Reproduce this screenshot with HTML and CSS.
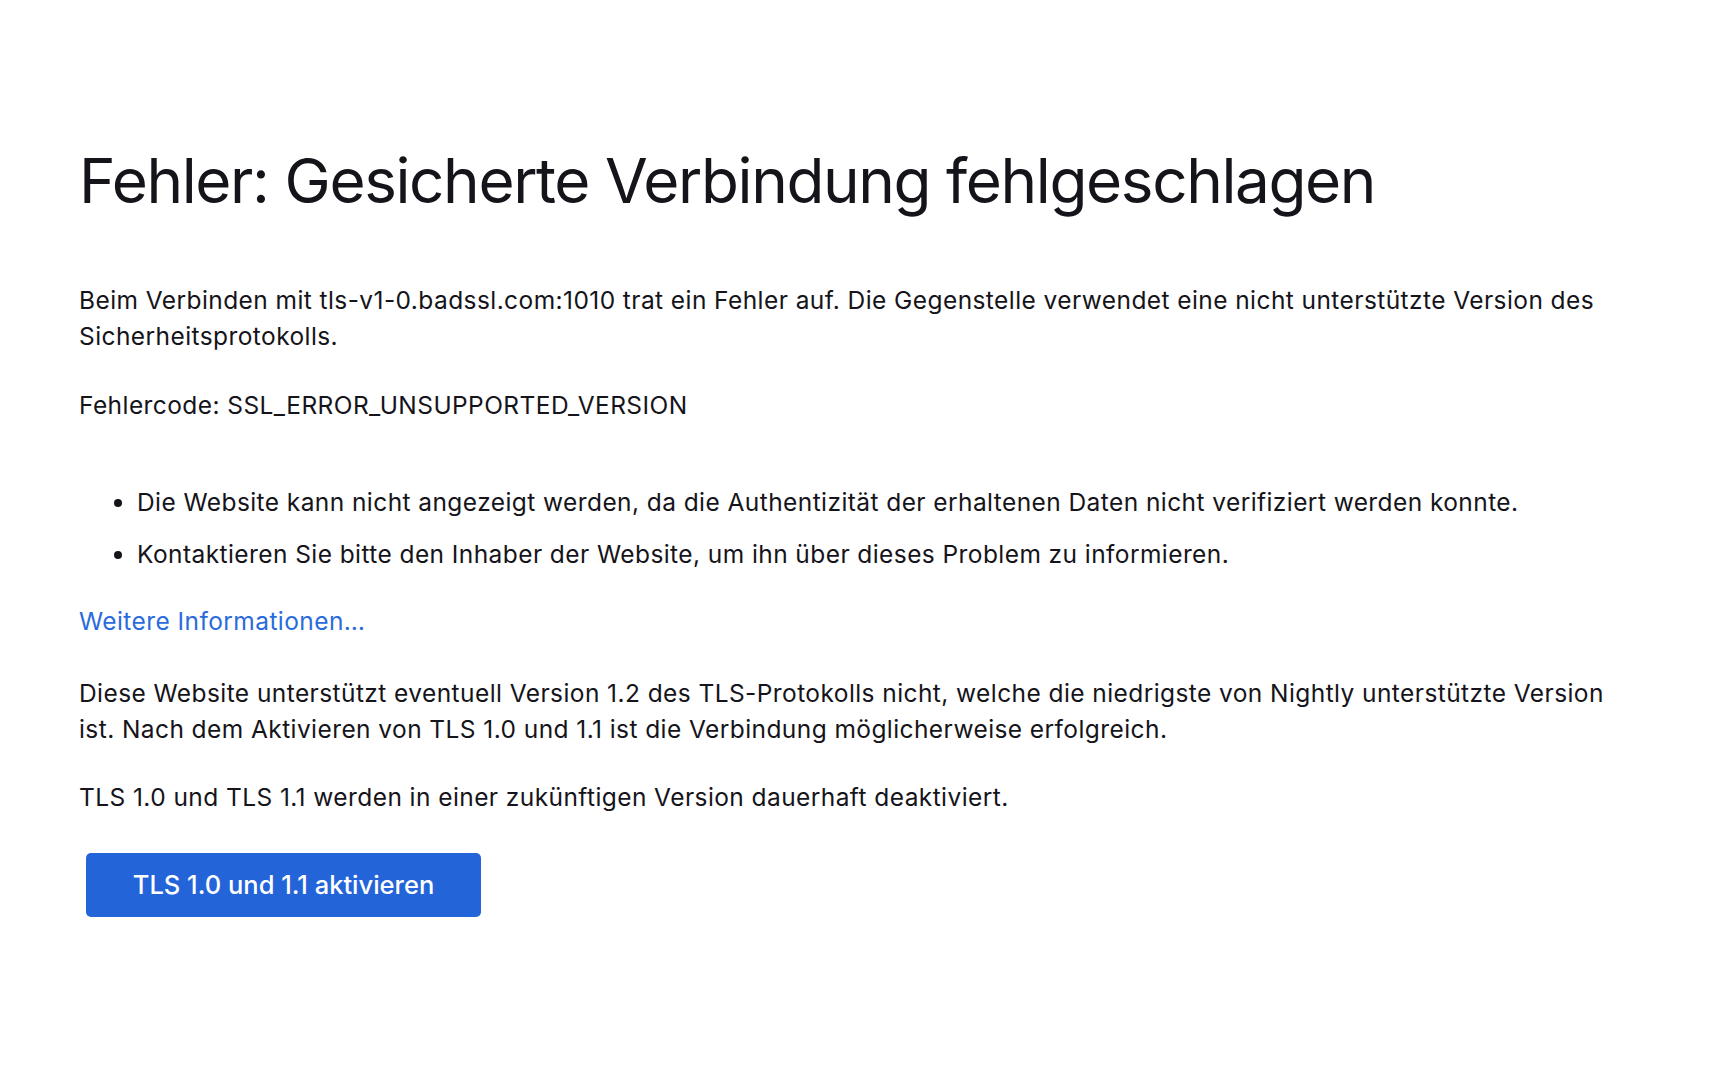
FILE: index.html
```html
<!DOCTYPE html>
<html lang="de">
<head>
<meta charset="utf-8">
<title>Fehler: Gesicherte Verbindung fehlgeschlagen</title>
<link rel="stylesheet" href="styles.css">
</head>
<body>
<main class="error-page">
  <h1 class="title">Fehler: Gesicherte Verbindung fehlgeschlagen</h1>
  <p class="text desc">Beim Verbinden mit tls-v1-0.badssl.com:1010 trat ein Fehler auf. Die Gegenstelle verwendet eine nicht unterstützte Version des Sicherheitsprotokolls.</p>
  <p class="text code">Fehlercode: SSL_ERROR_UNSUPPORTED_VERSION</p>
  <ul class="reasons">
    <li>Die Website kann nicht angezeigt werden, da die Authentizität der erhaltenen Daten nicht verifiziert werden konnte.</li>
    <li>Kontaktieren Sie bitte den Inhaber der Website, um ihn über dieses Problem zu informieren.</li>
  </ul>
  <a class="learn-more" href="#">Weitere Informationen…</a>
  <p class="text tls-info">Diese Website unterstützt eventuell Version 1.2 des TLS-Protokolls nicht, welche die niedrigste von Nightly unterstützte Version ist. Nach dem Aktivieren von TLS 1.0 und 1.1 ist die Verbindung möglicherweise erfolgreich.</p>
  <p class="text tls-note">TLS 1.0 und TLS 1.1 werden in einer zukünftigen Version dauerhaft deaktiviert.</p>
  <div class="actions">
    <button class="primary" type="button">TLS 1.0 und 1.1 aktivieren</button>
  </div>
</main>
</body>
</html>
```
FILE: styles.css
```css
html, body {
  margin: 0;
  padding: 0;
  background: #ffffff;
}

body {
  font-family: Inter, "Noto Sans", "DejaVu Sans", sans-serif;
  color: #15141a;
  font-size: 24.5px;
  line-height: 36px;
  letter-spacing: 0.42px;
}

.error-page {
  display: flex;
  flex-direction: column;
  align-items: flex-start;
  width: 1545px;
  margin-left: 79px;
  padding-top: 144px;
}

.title {
  margin: 0 0 64px;
  font-size: 62px;
  line-height: 74px;
  font-weight: 400;
  letter-spacing: -1.4px;
}

.text {
  margin: 0;
}

.desc {
  margin-bottom: 33px;
}

.code {
  margin-bottom: 61px;
}

.reasons {
  margin: 0 0 31px;
  padding-left: 58px;
}

.reasons li {
  margin: 0;
}

.reasons li + li {
  margin-top: 16px;
}

.learn-more {
  color: #2a6bdc;
  text-decoration: none;
  margin-bottom: 36px;
}

.tls-info {
  margin-bottom: 32px;
}

.tls-note {
  margin-bottom: 38px;
}

.actions {
  padding-left: 7px;
}

.primary {
  font-family: inherit;
  font-size: 25.5px;
  font-weight: 500;
  line-height: 36px;
  letter-spacing: 0;
  color: #ffffff;
  background: #2364d9;
  border: none;
  border-radius: 5px;
  height: 64px;
  width: 395px;
  padding: 0;
  cursor: pointer;
}
```
